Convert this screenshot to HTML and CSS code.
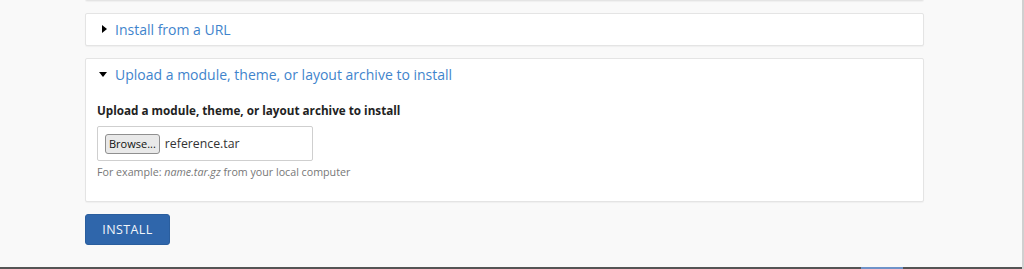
FILE: index.html
```html
<!DOCTYPE html>
<html lang="en">
    <head>
        <title>Install new module</title>
        <link rel="stylesheet" href="styles.css">
    </head>
    <body>
        <div class="page">
            <form class="install-form">
                <div class="card card-cut"></div>

                <details class="card">
                    <summary>Install from a URL</summary>
                </details>

                <details class="card" open>
                    <summary>Upload a module, theme, or layout archive to install</summary>
                    <div class="card-body">
                        <label class="field-label" for="upload">Upload a module, theme, or layout archive to install</label>
                        <div class="file-box">
                            <span class="browse">Browse...</span>
                            <span class="file-name">reference.tar</span>
                        </div>
                        <div class="description">For example: <em>name.tar.gz</em> from your local computer</div>
                    </div>
                </details>

                <div class="actions">
                    <button type="button" class="button-primary">Install</button>
                </div>
            </form>
        </div>
        <div class="bottom-bar"><span class="bottom-tab"></span></div>
    </body>
</html>
```

FILE: styles.css
```css
html, body {
    margin: 0;
    height: 100%;
}
body {
    background: #f9f9f9;
    font-family: "Open Sans", "Liberation Sans", sans-serif;
    color: #222;
    border-right: 2px solid #d0d0d0;
    box-sizing: border-box;
    position: relative;
    overflow: hidden;
}
.page {
    padding-left: 85px;
    width: 839px;
}
.install-form {
    display: flex;
    flex-direction: column;
    gap: 12px;
}
.card {
    background: #fff;
    border: 1px solid #e4e4e4;
    border-radius: 2px;
    box-shadow: 0 1px 1px rgba(0,0,0,0.04);
}
.card-cut {
    height: 30px;
    margin-top: -31px;
}
.card summary {
    list-style: none;
    cursor: pointer;
    color: #3f84cc;
    font-size: 14px;
    line-height: 19px;
    padding: 6px 12px 6px 29px;
    position: relative;
}
.card summary::-webkit-details-marker {
    display: none;
}
.card summary::before {
    content: "";
    position: absolute;
    left: 16px;
    top: 11px;
    border-style: solid;
    border-width: 4px 0 4px 5px;
    border-color: transparent transparent transparent #000;
}
.card[open] summary::before {
    left: 13px;
    top: 13px;
    border-width: 5px 4px 0 4px;
    border-color: #000 transparent transparent transparent;
}
.card[open] summary {
    padding-bottom: 12px;
}
.card-body {
    padding: 6px 12px 21px 11px;
}
.field-label {
    display: block;
    font-weight: bold;
    font-size: 11.7px;
    line-height: 17px;
    margin-bottom: 7px;
}
.file-box {
    box-sizing: border-box;
    width: 216px;
    height: 35px;
    border: 1px solid #cfcfcf;
    border-radius: 2px;
    display: flex;
    align-items: center;
    gap: 5px;
    padding-left: 7px;
    font-size: 12.3px;
}
.browse {
    background: #e9e9e9;
    border: 1px solid #8f8f8f;
    border-radius: 3px;
    padding: 1px 3px;
    font-size: 11px;
    line-height: 16px;
    color: #111;
}
.file-name {
    color: #333;
}
.description {
    font-size: 10.7px;
    color: #777;
    margin-top: 3px;
    line-height: 16px;
}
.button-primary {
    background: #2f66ab;
    border: 1px solid #2a5e9e;
    border-radius: 3px;
    color: #f2f5fa;
    font-family: inherit;
    font-size: 12.5px;
    font-weight: 500;
    letter-spacing: 0.4px;
    text-transform: uppercase;
    width: 85px;
    height: 31px;
    padding: 0;
}
.bottom-bar {
    position: absolute;
    left: 0;
    right: 0;
    bottom: 0;
    height: 2px;
    background: #555;
}
.bottom-tab {
    position: absolute;
    left: 861px;
    top: 0;
    width: 42px;
    height: 2px;
    background: #6f93c8;
}
```
